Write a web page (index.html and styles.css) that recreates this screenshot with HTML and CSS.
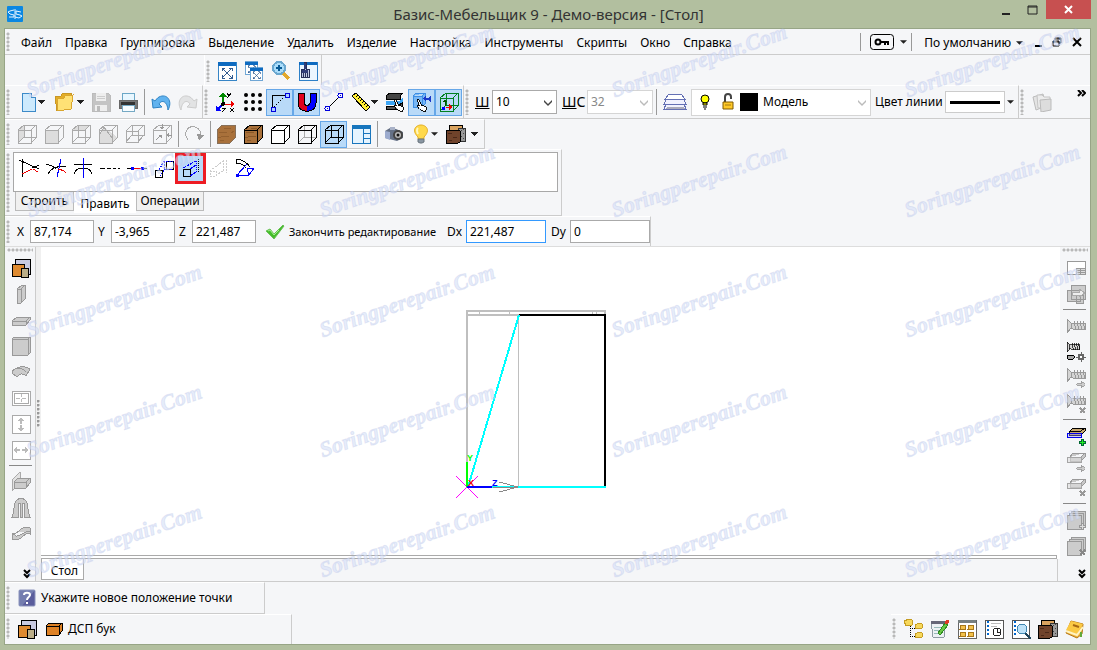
FILE: index.html
```html
<!DOCTYPE html>
<html lang="ru">
<head>
<meta charset="utf-8">
<title>Базис-Мебельщик 9 - Демо-версия - [Стол]</title>
<link rel="stylesheet" href="styles.css">
</head>
<body>
<svg class="defs" aria-hidden="true">
  <symbol id="cube" viewBox="0 0 20 20"><path d="M1 6h13v13H1zM1 6l6-5h12v13l-5 5M14 6l5-5" fill="none" stroke="currentColor"/></symbol>
  <symbol id="cubewire" viewBox="0 0 20 20"><path d="M1 6h13v13H1zM1 6l6-5h12v13l-5 5M14 6l5-5M7 1v12h12M7 13l-6 6" fill="none" stroke="currentColor"/></symbol>
  <symbol id="caret" viewBox="0 0 8 4"><path d="M0 0h8L4 4z" fill="#222"/></symbol>
  <symbol id="chev" viewBox="0 0 8 8"><path d="M0 1v2l4 4 4-4V1L4 5z" fill="currentColor"/></symbol>
  <symbol id="dbl" viewBox="0 0 8 10"><path d="M1 1l3 3 3-3M1 5l3 3 3-3" fill="none" stroke="#000" stroke-width="2"/></symbol>
  <symbol id="screw" viewBox="0 0 20 14"><path d="M1 0l4 4h2l2 0h10v6H7L5 9l-4 5zM5 4v6" fill="#d4d4d4" stroke="currentColor"/><path d="M8 2l2 9M11 2l2 9M14 2l2 9M17 2l2 9" stroke="currentColor"/></symbol>
  <symbol id="plates" viewBox="0 0 20 12"><path d="M4 5l3-4h12v4l-4 4H4zM4 5h11l4-4M15 5v4" fill="#c8c8c8" stroke="#999"/><path d="M1 5h14v5H1z" fill="#ddd" fill-opacity=".6" stroke="#a5a5a5"/></symbol>
  <symbol id="sheets" viewBox="0 0 20 20"><path d="M5 1h14v14h-2v2h-2v2H1V5h2V3h2z" fill="#ccc" stroke="#999"/><path d="M1 5h14v14M3 3h14v14" fill="none" stroke="#999"/></symbol>
  <symbol id="arrow" viewBox="0 0 10 8"><path d="M0 3h5V0l5 4-5 4V5H0z" fill="#ccc" stroke="#999"/></symbol>
  <symbol id="hand" viewBox="0 0 12 14"><path d="M1 1l2 0 3 6 4 1 1 3-1 2-3 0-3-2-3-4 2 0z" fill="#fff" stroke="#000"/></symbol>
  <symbol id="boards" viewBox="0 0 20 20"><path d="M4 1h15v15H4z" fill="#c8cae0" stroke="#000"/><path d="M1 6h12v12H1z" fill="#de8a30" stroke="#000"/><path d="M10 10h7v9h-7z" fill="#bbae88" stroke="#000"/></symbol>
  <symbol id="samples" viewBox="0 0 22 20"><path d="M4 1h13v5H4z" fill="#d9a35f" stroke="#000"/><path d="M14 4h6v13h-7z" fill="#999" stroke="#333"/><path d="M16 6h1M18 9h1M16 12h1M18 14h1M18 5h1" stroke="#444"/><path d="M1 6h12l2 1v11l-2 1H1z" fill="#70432b" stroke="#000"/><path d="M3 9h4M8 13h4M4 16h3" stroke="#4b2818"/></symbol>
  <symbol id="winx" viewBox="0 0 20 20"><path d="M1 1h18v18H1z" fill="#fff" stroke="#3685c6"/><path d="M1 1h18v4H1z" fill="#0d6ac0"/><path d="M5 7l10 10M15 7L5 17M5 10V7h3M12 7h3v3M5 14v3h3M12 17h3v-3" fill="none" stroke="#315b91"/></symbol>
</svg>

<header class="title">
  <svg class="logo" viewBox="0 0 16 16"><rect width="16" height="16" rx="1" fill="#0b87e2"/><path d="M7 4L3 5 1 6l2 2 4 1v2L2 11M14 6L9 5v3l4 1 2 1-3 2-4-1M8 3v10" fill="none" stroke="#e8f5ff"/></svg>
  <h1>Базис-Мебельщик 9 - Демо-версия - [Стол]</h1>
  <div class="winbtns">
    <button aria-label="Свернуть"><svg width="10" height="12"><path d="M1 10h8" stroke="#222" stroke-width="2"/></svg></button>
    <button aria-label="Развернуть"><svg width="12" height="10"><path d="M1 1h9v8H1zM1 2h9" fill="none" stroke="#222"/></svg></button>
    <button class="close" aria-label="Закрыть"><svg width="10" height="10"><path d="M1 1l7 7M8 1L1 8" stroke="#fff" stroke-width="2"/></svg></button>
  </div>
</header>

<main class="window">
  <nav class="menu">
    <i class="grip"></i>
    <button>Файл</button><button>Правка</button><button>Группировка</button><button>Выделение</button><button>Удалить</button><button>Изделие</button><button>Настройка</button><button>Инструменты</button><button>Скрипты</button><button>Окно</button><button>Справка</button>
    <div class="menuend">
      <i class="sep"></i>
      <button class="key" aria-label="Ключ"><svg width="24" height="16" viewBox="0 0 24 16"><rect x=".5" y=".5" width="23" height="15" rx="3" fill="#f5f6f8" stroke="#000"/><circle cx="8" cy="8" r="2.5" fill="none" stroke="#000" stroke-width="2"/><path d="M11 8h8M15 8v3M18 8v3" stroke="#000" stroke-width="2"/></svg><svg class="caret"><use href="#caret"/></svg></button>
      <i class="sep"></i>
      <button class="preset">По умолчанию <svg class="caret"><use href="#caret"/></svg></button>
      <button class="mdi" aria-label="Свернуть документ"><svg width="8" height="10"><path d="M0 9h7" stroke="#000" stroke-width="2"/></svg></button>
      <button class="mdi" aria-label="Восстановить документ"><svg width="10" height="10"><path d="M3 3V1h6v5H7M3 2h6M1 4h6v5H1zM1 5h6" fill="none" stroke="#000"/></svg></button>
      <button class="mdi" aria-label="Закрыть документ"><svg width="10" height="10"><path d="M1 1l8 8M9 1L1 9" stroke="#000" stroke-width="2"/></svg></button>
    </div>
  </nav>

  <div class="row viewrow">
    <div class="bar">
      <i class="grip"></i>
      <button class="btn" aria-label="Показать всё"><svg><use href="#winx"/></svg></button>
      <button class="btn" aria-label="Показать все окна"><svg viewBox="0 0 20 20"><use href="#winx" width="15" height="14"/><use href="#winx" x="5" y="6" width="15" height="14"/></svg></button>
      <button class="btn" aria-label="Увеличить"><svg viewBox="0 0 20 20"><path d="M12 12l6 6" stroke="#e2a82e" stroke-width="4"/><circle cx="8" cy="7" r="6" fill="#a9dcfa" stroke="#6aa7cf" stroke-width="2"/><path d="M5 7h6M8 4v6" stroke="#085a95" stroke-width="2"/></svg></button>
      <button class="btn" aria-label="Очистить окно"><svg viewBox="0 0 20 20"><path d="M1 1h18v18H1z" fill="#ecf6ff" stroke="#2d80c8"/><path d="M1 1h18v3H1z" fill="#0d6ac0"/><path d="M6 1h2v7h3v8H3V8h3z" fill="#bfc9e4" stroke="#27305a"/><path d="M4 9h6v3H4zM6 2h2v6H6z" fill="#303d79"/><path d="M5 12v4M7 12v4M9 12v4" stroke="#27305a"/></svg></button>
    </div>
  </div>

  <div class="row mainrow">
    <div class="bar">
      <i class="grip"></i>
      <button class="split" aria-label="Создать"><svg viewBox="0 0 20 20"><path d="M4 1h9l4 4v14H4z" fill="#cdeafd" stroke="#3c8ac8"/><path d="M13 1v4h4" fill="#fff" stroke="#3c8ac8"/></svg><svg class="caret"><use href="#caret"/></svg></button>
      <button class="split wide" aria-label="Открыть"><svg viewBox="0 0 20 20"><path d="M1 5l6-1 1-2 9-1 1 4-2 12-13 2z" fill="#e4ad27" stroke="#c89724"/><path d="M3 7l7-1 1-2 8-1-2 14-13 2z" fill="#ffe175" stroke="#d9a62e"/></svg><svg class="caret"><use href="#caret"/></svg></button>
      <button class="btn" disabled aria-label="Сохранить"><svg viewBox="0 0 20 20"><path d="M1 1h16l2 2v16H1z" fill="#c4c4c4" stroke="#bbb"/><path d="M5 1h10v8H5zM4 13h12v6H4z" fill="#eee"/><path d="M6 14h3v5H6z" fill="#bbb"/><path d="M6 4h8M6 6h8" stroke="#ccc"/></svg></button>
      <button class="btn" aria-label="Печать"><svg viewBox="0 0 20 20"><path d="M4 1h12v7H4z" fill="#e8f7ff" stroke="#6ba7c7"/><path d="M1 8h18v8H1z" fill="#777" stroke="#666"/><path d="M3 10h14v3H3z" fill="#333"/><path d="M4 13h12v6H4z" fill="#f7fcff" stroke="#75a9c4"/></svg></button>
      <i class="sep"></i>
      <button class="btn soft" aria-label="Отменить"><svg viewBox="0 0 20 20"><path d="M1 7l1 9 9-1-3-3c2-4 8-4 9 6 5-9-1-17-9-13-2 1-3 3-4 4z" fill="#61b3ef" stroke="#2c82c4"/></svg></button>
      <button class="btn soft" disabled aria-label="Вернуть"><svg viewBox="0 0 20 20"><path d="M19 7l-1 9-9-1 3-3c-2-4-8-4-9 6-5-9 1-17 9-13 2 1 3 3 4 4z" fill="#e2e3e4" stroke="#ccc"/></svg></button>
    </div>
    <div class="bar">
      <i class="grip"></i>
      <button class="btn" aria-label="Оси"><svg viewBox="0 0 20 20"><path d="M7 13V3" stroke="#080" stroke-width="2"/><path d="M3 5l4-5 4 5z" fill="#080"/><path d="M7 12h9" stroke="#e00"/><path d="M15 9l4 3-4 3z" fill="#e00"/><path d="M6 13l-4 4" stroke="#00f" stroke-width="2"/><path d="M0 14v5h5z" fill="#00f"/><circle cx="7" cy="12" r="2"/><path d="M11 1l2 3 2-3M13 4l-2 2M14 16l4 4M18 16l-4 4M6 16h4l-4 4h4" fill="none" stroke="#000"/></svg></button>
      <button class="btn soft" aria-label="Сетка"><svg viewBox="0 0 20 20"><path d="M3 3h.01M10 3h.01M17 3h.01M3 10h.01M10 10h.01M17 10h.01M3 17h.01M10 17h.01M17 17h.01" stroke="#000" stroke-width="4" stroke-linecap="round"/></svg></button>
      <button class="btn on" aria-label="Привязка к точкам"><svg viewBox="0 0 20 20"><path d="M2 15V3h13" fill="none" stroke="#000"/><path d="M4 15L15 4" stroke="#000" stroke-dasharray="1 2"/><path d="M1 15h4v4H1zM15 1h4v4h-4z" fill="#acf" stroke="#00d"/></svg></button>
      <button class="btn on" aria-label="Магнит"><svg viewBox="0 0 20 20"><path d="M1 1h6v10c0 3 6 3 6 0V1h6v10c0 11-18 11-18 0z" fill="#00f" stroke="#000"/><path d="M1 1h6v10c0 2 2 3 3 3v5c-6 0-9-4-9-8z" fill="#e2001b"/><path d="M1 1h6v10c0 3 6 3 6 0V1h6v10c0 11-18 11-18 0z" fill="none" stroke="#000"/></svg></button>
      <button class="btn" aria-label="Отрезок"><svg viewBox="0 0 20 20"><path d="M5 15L15 5" stroke="#000"/><g fill="#f5f6f8" stroke="#00d"><circle cx="3.500" cy="16.500" r="2.500"/><circle cx="16.500" cy="3.500" r="2.500"/></g><path d="M3 16h1v1H3zM16 3h1v1h-1z" fill="#00d"/></svg></button>
      <button class="split ruler" aria-label="Измерить"><svg viewBox="0 0 20 20"><path d="M1 4l4-3 14 14-4 4z" fill="#ffed35" stroke="#000"/><path d="M7 3L5 5M9 5L7 7M11 7L9 9M13 9l-2 2M15 11l-2 2M17 13l-2 2" stroke="#000"/></svg><svg class="caret"><use href="#caret"/></svg></button>
      <button class="btn" aria-label="Выбор слоя"><svg viewBox="0 0 20 20"><path d="M1 4l4-3h13l-3 3v3H1z" fill="#444" stroke="#000"/><path d="M1 9h13l4-3v4l-4 3H1z" fill="#3ca5f4"/><path d="M1 14h12l4-3v3l-4 3H1z" fill="#555" stroke="#000"/><use href="#hand" x="8" y="7" width="12" height="13"/></svg></button>
      <button class="btn on" aria-label="Выбор объекта"><svg viewBox="0 0 20 20"><path d="M1 4l3-3h9v11l-3 3H1zM1 4h9l3-3M10 4v11" fill="#78b7f5" stroke="#3c8ee5"/><path d="M11 6l3-2v2h2l3-3v8l-3-3h-2v2z" fill="#1a39c8"/><use href="#hand" x="4" y="7" width="12" height="13"/></svg></button>
      <button class="btn on" aria-label="Оси объекта"><svg class="green" viewBox="0 0 20 20"><use href="#cubewire"/><path d="M6 14V8" stroke="#050"/><path d="M4 10l2-3 2 3z" fill="#050"/><path d="M7 15h5" stroke="#e00"/><path d="M10 12l4 3-4 3z" fill="#e00"/><path d="M3 15h3v3H3z" fill="#00f"/></svg></button>
    </div>
    <div class="bar props">
      <i class="grip"></i>
      <label class="lbl" for="w"><u>Ш</u></label>
      <span class="sel w1"><select id="w"><option>10</option></select><svg class="chev"><use href="#chev"/></svg></span>
      <label class="lbl two" for="ws"><u>Ш</u>С</label>
      <span class="sel w2 off"><select id="ws" disabled><option>32</option></select><svg class="chev"><use href="#chev"/></svg></span>
      <i class="sep"></i>
      <button class="btn layers" aria-label="Слои"><svg class="w24" viewBox="0 0 24 20"><path d="M6 2h12l4 5H2z" fill="#fff" stroke="#6470b4"/><path d="M3 8l-2 4h22l-2-4M3 12l-2 5h22l-2-5" fill="#f1f2ff" stroke="#6470b4"/><path d="M4 15h16l2 2H2z" fill="#aab"/></svg></button>
      <span class="sel model off">
        <svg width="10" height="16" viewBox="0 0 10 16"><circle cx="5" cy="5" r="4" fill="#ff0" stroke="#000"/><path d="M3 9h4v2H3zM3 13h4M4 15h2" fill="#ff0" stroke="#000"/></svg>
        <svg width="12" height="18" viewBox="0 0 12 18"><path d="M3 9V4c0-4 6-4 6 0v2" fill="none" stroke="#444" stroke-width="2"/><path d="M1 9h10v7H1z" fill="#ffc928" stroke="#805b00"/><path d="M3 12h6" stroke="#a57a10"/></svg>
        <i class="swatch"></i>
        <select aria-label="Слой"><option>Модель</option></select><svg class="chev"><use href="#chev"/></svg>
      </span>
      <span class="lbl color">Цвет линии</span>
      <button class="line" aria-label="Цвет линии"><i></i></button>
      <svg class="caret"><use href="#caret"/></svg>
    </div>
    <div class="bar last">
      <i class="grip"></i>
      <button class="btn soft" disabled aria-label="Копии"><svg viewBox="0 0 20 20"><path d="M1 5l10-3 3 12-10 4z" fill="#e4e4e4" stroke="#bbb"/><path d="M5 3h5l2 2h6v11H6z" fill="#ececec" stroke="#c5c5c5"/><path d="M8 8l11-1v11l-10 2z" fill="#ddd" stroke="#bbb"/></svg></button>
      <button class="more" aria-label="Ещё"><svg width="9" height="7"><path d="M1 0l3 3-3 3M5 0l3 3-3 3" fill="none" stroke="#000" stroke-width="2"/></svg></button>
    </div>
  </div>

  <div class="row boxrow">
    <div class="bar gray">
      <i class="grip"></i>
      <button class="btn" aria-label="Вид слева"><svg viewBox="0 0 20 20"><path d="M1 6l6-5v12l-6 6z" fill="#ddd"/><use href="#cubewire"/></svg></button>
      <button class="btn" aria-label="Вид спереди"><svg viewBox="0 0 20 20"><path d="M1 6h13v13H1z" fill="#ddd"/><use href="#cube"/></svg></button>
      <button class="btn" aria-label="Вид сверху"><svg viewBox="0 0 20 20"><path d="M1 6l6-5h12l-5 5z" fill="#ddd"/><use href="#cubewire"/></svg></button>
      <button class="btn" aria-label="Изометрия"><svg viewBox="0 0 20 20"><path d="M1 19V12L6 3l13 10-5 6z" fill="#ddd"/><use href="#cube"/><path d="M1 12L6 3l8 11" fill="none" stroke="#aaa"/></svg></button>
      <button class="btn" aria-label="Перспектива"><svg viewBox="0 0 20 20"><path d="M1 7h12v11H1zM7 1h12v10H7zM1 7l6-6M13 7l6-6M13 18l6-7M1 18l6-7" fill="none" stroke="#aaa"/></svg></button>
      <button class="btn" aria-label="По нормали"><svg viewBox="0 0 20 20"><use href="#cube"/><path d="M10 0v5M15 11h5M4 16l5-5" fill="none" stroke="#999"/><path d="M8 3h4l-2 3zM17 9v4l-3-2zM6 11h4v4z" fill="#999"/></svg></button>
      <i class="sep s5"></i>
      <button class="btn" aria-label="Повернуть"><svg viewBox="0 0 20 20"><path d="M4 16C-2 8 5 1 11 3c4 1 6 5 6 8" fill="none" stroke="#aaa"/><path d="M13 10l2 7 5-6z" fill="#999"/></svg></button>
      <i class="sep s5"></i>
      <button class="btn" aria-label="Текстура"><svg viewBox="0 0 20 20"><path d="M1 6l5-5h13v13l-5 5H1z" fill="#a9713b" stroke="#87705a"/><path d="M3 9l4-1 4 1M2 14l6-2 5 1M8 4l7 1M15 9l3-2M4 17l4-1" fill="none" stroke="#94602f"/></svg></button>
      <button class="btn" aria-label="Текстура с рёбрами"><svg class="black" viewBox="0 0 20 20"><path d="M1 6l6-5h12v13l-5 5H1z" fill="#a9713b"/><path d="M3 9l4-1 4 1M2 14l6-2 5 1M8 4l6 0M4 17l4-1" fill="none" stroke="#8a5828"/><use href="#cube"/></svg></button>
      <button class="btn" aria-label="Без невидимых линий"><svg class="black" viewBox="0 0 20 20"><path d="M1 6l6-5h12v13l-5 5H1z" fill="#fff"/><use href="#cube"/></svg></button>
      <button class="btn" aria-label="Тонкие невидимые линии"><svg class="black" viewBox="0 0 20 20"><path d="M7 1v12h12M7 13l-6 6" fill="none" stroke="#aaa"/><use href="#cube"/></svg></button>
      <button class="btn on" aria-label="Каркас"><svg class="black"><use href="#cubewire"/></svg></button>
      <button class="btn" aria-label="Панели"><svg viewBox="0 0 20 20"><path d="M1 1h18v18H1zM12 4v15M12 9h7M12 14h7" fill="#e5f4ff" stroke="#1976bd"/><path d="M1 1h18v4H1z" fill="#1675bd"/></svg></button>
      <i class="sep"></i>
      <button class="btn soft" aria-label="Камера"><svg viewBox="0 0 20 20"><path d="M1 7l5-3 6 1 7 3v6l-6 3-12-3z" fill="#657186"/><path d="M1 7l5 1v8l-5-2z" fill="#9cabce"/><path d="M6 3h5v3H6z" fill="#a9b2c8"/><circle cx="14" cy="11" r="5" fill="#444"/><circle cx="14" cy="11" r="3" fill="#bbb"/><circle cx="14" cy="11" r="1.500" fill="#111"/></svg></button>
      <button class="split ruler soft" aria-label="Освещение"><svg viewBox="0 0 20 20"><path d="M7 13C0 6 5 1 10 1s10 5 3 12v2H7z" fill="#ffd94b" stroke="#e3ae25"/><path d="M7 4c-2 2-1 4 0 6" stroke="#fff6c0" stroke-width="2" fill="none"/><path d="M7 15h6v3l-2 1H9l-2-1z" fill="#8996a2" stroke="#69747c"/></svg><svg class="caret"><use href="#caret"/></svg></button>
      <button class="split mats" aria-label="Материалы"><svg class="w22"><use href="#samples"/></svg><svg class="caret"><use href="#caret"/></svg></button>
    </div>
  </div>

  <div class="row editrow">
    <div class="bar">
      <i class="grip"></i>
      <div class="tabpanel">
        <div class="tools">
          <button class="btn" aria-label="Усечь"><svg viewBox="0 0 20 20"><path d="M3 1v18M0 2l20 9M13 10l7-3" fill="none" stroke="#000"/><path d="M3 16l10-5M14 11l5 3" stroke="#e00"/></svg></button>
          <button class="btn" aria-label="Удлинить"><svg viewBox="0 0 20 20"><path d="M0 6c4 1 7 2 10 5M2 16c2-5 9-8 18-8" fill="none" stroke="#000"/><path d="M11 19l4-18" stroke="#00f"/><path d="M12 11c4 1 6 1 8 4" fill="none" stroke="#e00"/></svg></button>
          <button class="btn" aria-label="Разрезать"><svg viewBox="0 0 20 20"><path d="M1 6h18M1 16C3 8 17 8 19 16" fill="none" stroke="#000"/><path d="M10 0v20" stroke="#00f"/></svg></button>
          <button class="btn" aria-label="Разбить"><svg viewBox="0 0 20 20"><path d="M0 10h5M7 10h4M13 10h3M18 10h2" stroke="#000"/></svg></button>
          <button class="btn" aria-label="Соединить"><svg viewBox="0 0 20 20"><path d="M0 10h20" stroke="#000"/><path d="M5 10h10" stroke="#e00"/><path d="M4 9h3v3H4zM14 9h3v3h-3z" fill="#00f"/></svg></button>
          <button class="btn" aria-label="Сдвиг"><svg viewBox="0 0 20 20"><path d="M1 12h7v7H1z" fill="#fff" stroke="#000"/><path d="M12 3h7v8h-7z" fill="#fff" stroke="#000"/><path d="M5 12l5-9h9M10 3v9l-4 6M10 12l9-1" fill="none" stroke="#00f" stroke-dasharray="2 1"/></svg></button>
          <button class="btn picked" aria-label="Растянуть"><svg viewBox="0 0 20 20"><path d="M2 11h7v7H2z" fill="none" stroke="#000"/><path d="M2 10L15 3M9 18l6-4M9 11l6-4" fill="none" stroke="#00f" stroke-dasharray="3 1"/><path d="M15 3v11" stroke="#00f" stroke-dasharray="1 1"/><path d="M17 1v14" stroke="#000" stroke-dasharray="1 1"/></svg></button>
          <button class="btn" disabled aria-label="Сжать"><svg viewBox="0 0 20 20"><path d="M2 13h6v5H2zM2 13L15 3v10L8 17M18 2v13" fill="none" stroke="#ccc" stroke-dasharray="2 1"/></svg></button>
          <button class="btn" aria-label="Повернуть точку"><svg viewBox="0 0 20 20"><path d="M1 5V1c8 1 11 4 14 8M1 5c4 0 8 2 10 5" fill="none" stroke="#000"/><path d="M2 17l10-11M2 17h12M12 10h7l-5 7z" fill="none" stroke="#00f"/><path d="M1 16h3v3H1z" fill="#00f"/></svg></button>
        </div>
        <div class="tabs"><button>Строить</button><button class="cur">Править</button><button>Операции</button></div>
      </div>
    </div>
  </div>

  <div class="row coordrow">
    <div class="bar">
      <i class="grip"></i>
      <label>X <input value="87,174"></label>
      <label>Y <input value="-3,965"></label>
      <label>Z <input value="221,487"></label>
      <button class="done"><svg viewBox="0 0 20 16"><path d="M1 7l4-2 4 5 9-9 1 1-10 13z" fill="#45bd2b" stroke="#6abf58"/><path d="M3 7l2-1 4 5 5-5" stroke="#a4ef8f" fill="none"/></svg>Закончить редактирование</button>
      <label class="long">Dx <input class="focus" value="221,487"></label>
      <label class="long">Dy <input value="0"></label>
    </div>
  </div>

  <div class="work">
    <aside class="side left">
      <i class="hgrip"></i>
      <button class="tool" aria-label="Изделие"><svg viewBox="0 0 20 20"><use href="#boards"/></svg></button>
      <button class="tool" aria-label="Вертикальная панель"><svg viewBox="0 0 20 20"><path d="M6 5l5-4h3v14l-4 4H6zM6 5h4v14M10 5l4-4" fill="#ccc" stroke="#999"/></svg></button>
      <button class="tool" aria-label="Горизонтальная панель"><svg viewBox="0 0 20 20"><path d="M1 11l5-4h13v3l-4 5H1zM1 11h14v4M15 11l4-4" fill="#ccc" stroke="#999"/></svg></button>
      <button class="tool" aria-label="Фронтальная панель"><svg viewBox="0 0 20 20"><path d="M1 3l2-2h16v16l-2 2H1zM1 3h16v16M17 3l2-2" fill="#ccc" stroke="#999"/></svg></button>
      <button class="tool" aria-label="Гнутая панель"><svg viewBox="0 0 20 20"><path d="M1 11C4 4 14 3 19 7l-4 7c-3-3-6-3-9 1z" fill="#ccc" stroke="#999"/><path d="M1 9c4-4 10-4 14 1" fill="none" stroke="#999"/></svg></button>
      <button class="tool" aria-label="По проёму"><svg viewBox="0 0 20 20"><path d="M1 3h18v14H1zM3 5h14v10H3z" fill="#fff" stroke="#aaa"/><path d="M5 10h4M11 10h4M10 6v3M10 11v3" stroke="#bbb"/></svg></button>
      <button class="tool" aria-label="По высоте"><svg viewBox="0 0 20 20"><path d="M1 1h18v18H1z" fill="#fff" stroke="#aaa"/><path d="M10 3l3 4h-2v3H9V7H7zM10 18l3-4h-2v-3H9v3H7z" fill="#bbb"/></svg></button>
      <button class="tool" aria-label="По ширине"><svg viewBox="0 0 20 20"><path d="M1 1h18v18H1z" fill="#fff" stroke="#aaa"/><path d="M2 10l4-3v2h3v2H6v2zM18 10l-4-3v2h-3v2h3v2z" fill="#bbb"/></svg></button>
      <i class="hsep"></i>
      <button class="tool" aria-label="Выдавливание"><svg viewBox="0 0 20 20"><path d="M1 19V8l8-8v10z" fill="#e2e2e2" stroke="#aaa"/><path d="M3 10l4-4h12v5l-4 5H3zM3 10h12v6M15 10l4-4" fill="#ccc" stroke="#999"/></svg></button>
      <button class="tool" aria-label="Вращение"><svg viewBox="0 0 20 20"><path d="M1 19C4 13 2 5 6 2c2-2 6-2 8 0 4 3 2 11 5 17h-6V5h-2v14H9V5H7v14z" fill="#ccc" stroke="#999"/></svg></button>
      <button class="tool" aria-label="По траектории"><svg viewBox="0 0 20 20"><path d="M1 9c5 2 6-2 9-4s5-2 9-1v6c-5-2-6 2-9 4s-5 2-9 1zM1 9l4 3c5 1 7-5 14-5" fill="#ccc" stroke="#999"/></svg></button>
      <button class="expand" aria-label="Ещё инструменты"><svg><use href="#dbl"/></svg></button>
    </aside>
    <div class="splitter"><i></i></div>
    <section class="doc">
      <svg class="canvas" role="img" aria-label="Чертёж стола">
        <g transform="translate(-41 -247)" fill="none" shape-rendering="crispEdges">
          <path d="M467 487V311h138v4M467 315h52" stroke="#bfbfbf" stroke-width="2"/>
          <path d="M518.500 315v172M479.500 312v3M509.500 312v3M592.500 312v3M596.500 312v3" stroke="#bfbfbf"/>
          <path d="M519 315h86v172" stroke="#000" stroke-width="2"/>
          <path d="M468 487l51-172M467 487h139" stroke="#0ff" stroke-width="2"/>
          <path d="M499 482l19 5-19 5M493 487.500h25" stroke="#888"/>
          <path d="M456 476l22 22M478 476l-22 22" stroke="#f0f"/>
          <path d="M467 487v-25" stroke="#0f0" stroke-width="2"/>
          <path d="M467 487h25" stroke="#00f" stroke-width="2"/>
          <g class="axis"><text x="467" y="461" fill="#0f0">Y</text><text x="468" y="486" fill="#e00">X</text><text x="492" y="486" fill="#00f">Z</text></g>
        </g>
      </svg>
      <div class="docline"></div>
      <div class="doctabs"><button>Стол</button><i></i></div>
    </section>
    <aside class="side right">
      <i class="hgrip"></i>
      <button class="tool" aria-label="Таблица"><svg viewBox="0 0 20 20"><path d="M1 3h18v13H1z" fill="#fff" stroke="#999"/><path d="M10 10h9v6h-9zM10 12h9M10 14h9M14 10v6" fill="#ddd" stroke="#999"/></svg></button>
      <button class="tool" aria-label="Переместить"><svg viewBox="0 0 20 20"><path d="M5 1h14v14H5zM1 6h13v11H1zM10 11h7v8h-7z" fill="#ccc" stroke="#999"/><path d="M6 8h7V5l6 4-6 4v-2H6z" fill="#eee" stroke="#aaa"/></svg></button>
      <i class="hsep"></i>
      <button class="tool gray2" aria-label="Крепёж"><svg viewBox="0 0 20 20"><use href="#screw" y="3" height="14"/></svg></button>
      <button class="tool" aria-label="Параметры крепежа"><svg class="black" viewBox="0 0 20 20"><use href="#screw" width="15" height="10"/><path d="M2 13h5l1 1v2l-1 1H2l-1-1v-2z" fill="#aaa" stroke="#000"/><circle cx="15" cy="15" r="2.500" fill="#fff" stroke="#666" stroke-width="2"/><path d="M15 10v2M15 18v2M10 15h2M18 15h2M12 12l1 1M18 12l-1 1M12 18l1-1M18 18l-1-1" stroke="#666"/></svg></button>
      <button class="tool gray2" aria-label="Переместить крепёж"><svg viewBox="0 0 20 20"><use href="#screw" height="14"/><use href="#arrow" x="10" y="13" width="10" height="7"/></svg></button>
      <button class="tool gray2" aria-label="Удалить крепёж"><svg viewBox="0 0 20 20"><use href="#screw" height="14"/><path d="M14 14l5 5M19 14l-5 5" stroke="#999" stroke-width="2"/></svg></button>
      <i class="hsep"></i>
      <button class="tool" aria-label="Добавить кромку"><svg viewBox="0 0 20 20"><path d="M3 6l4-4h12v3l-4 4H3z" fill="#c5a66f" stroke="#000"/><path d="M3 5h12l4-3M4 7h11" stroke="#000" fill="none"/><path d="M1 7h14v4H1z" fill="#99f" fill-opacity=".4" stroke="#00e"/><path d="M15 13h3v2h2v3h-2v2h-3v-2h-2v-3h2z" fill="#063"/><path d="M16 14h1v2h2v1h-2v2h-1v-2h-2v-1h2z" fill="#2e2"/></svg></button>
      <button class="tool" aria-label="Переместить кромку"><svg viewBox="0 0 20 20"><use href="#plates" height="12"/><use href="#arrow" x="10" y="13" width="10" height="7"/></svg></button>
      <button class="tool" aria-label="Удалить кромку"><svg viewBox="0 0 20 20"><use href="#plates" height="12"/><path d="M14 13l5 5M19 13l-5 5" stroke="#999" stroke-width="2"/></svg></button>
      <i class="hsep"></i>
      <button class="tool" aria-label="Добавить пласть"><svg viewBox="0 0 20 20"><use href="#sheets"/><path d="M15 13h3v2h2v3h-2v2h-3v-2h-2v-3h2z" fill="#999"/><path d="M16 14h1v2h2v1h-2v2h-1v-2h-2v-1h2z" fill="#ddd"/></svg></button>
      <button class="tool" aria-label="Удалить пласть"><svg viewBox="0 0 20 20"><use href="#sheets"/><path d="M14 14l5 5M19 14l-5 5" stroke="#888" stroke-width="2"/></svg></button>
      <button class="expand" aria-label="Ещё инструменты"><svg><use href="#dbl"/></svg></button>
    </aside>
  </div>

  <footer>
    <div class="bar hint">
      <i class="grip"></i>
      <svg viewBox="0 0 18 18"><rect x="1" y="1" width="16" height="16" rx="1" fill="#5a5d9c" stroke="#8c94bc"/><path d="M1 1h16L4 17H1z" fill="#8592bc" fill-opacity=".6"/><path d="M6 6c0-3 6-3 6 0 0 2-3 2-3 5M9 13v2" fill="none" stroke="#fff" stroke-width="2"/></svg>
      <span>Укажите новое положение точки</span>
    </div>
    <div class="foot2">
      <div class="bar material">
        <i class="grip"></i>
        <svg viewBox="0 0 20 20"><use href="#boards"/></svg>
        <svg viewBox="0 0 18 14"><path d="M1 4l3-3h13v8l-3 4H1zM1 4h13v9M14 4l3-3" fill="#de8226" stroke="#000"/></svg>
        <span>ДСП бук</span>
      </div>
      <div class="bar panels">
        <i class="grip"></i>
        <button class="btn" aria-label="Структура"><svg viewBox="0 0 20 20"><path d="M7 5v12h5M7 9h5" fill="none" stroke="#000" stroke-dasharray="1 1"/><path d="M1 2l5-2 3 1v5l-6 1zM12 6l4-2 3 1v4l-6 1zM12 15l4-2 3 1v4l-6 1z" fill="#f7d85b" stroke="#c59c22"/></svg></button>
        <button class="btn" aria-label="Свойства"><svg viewBox="0 0 20 20"><path d="M1 2h14l-1 16H3z" fill="#edf1f4" stroke="#8e9ba3"/><path d="M1 2h15v3H1z" fill="#667"/><path d="M4 8h7M4 11h5M4 14h5" stroke="#9bb"/><path d="M8 14L15 4l3 2-8 10z" fill="#68c844" stroke="#2d8920"/><circle cx="17" cy="3" r="2" fill="#dd3b27"/></svg></button>
        <button class="btn" aria-label="Библиотека"><svg viewBox="0 0 20 20"><path d="M1 1h18v18H1z" fill="#fff" stroke="#666"/><path d="M1 1h18v3H1z" fill="#777f80"/><path d="M4 6h4v4H3zM12 6h4v4h-5zM4 13h4v4H3zM12 13h4v4h-5z" fill="#f3c14b" stroke="#a97718"/></svg></button>
        <button class="btn" aria-label="История"><svg viewBox="0 0 20 20"><path d="M1 1h18v18H1z" fill="#fff" stroke="#555"/><path d="M4 2v16" stroke="#06c" stroke-width="2" stroke-dasharray="2 2"/><path d="M7 4h10M7 7h6" stroke="#bbb"/><circle cx="13" cy="13" r="4" fill="#fff" stroke="#222"/><path d="M13 10v3h3" fill="none" stroke="#222"/></svg></button>
        <button class="btn" aria-label="Поиск"><svg viewBox="0 0 20 20"><path d="M1 1h17v18H1z" fill="#fff" stroke="#555"/><path d="M4 2v16" stroke="#06c" stroke-width="2" stroke-dasharray="2 2"/><path d="M14 14l6 6" stroke="#20465c" stroke-width="2"/><circle cx="11" cy="10" r="5" fill="#bfe2f7" stroke="#4287b1"/></svg></button>
        <button class="btn" aria-label="Материалы"><svg class="w22"><use href="#samples"/></svg></button>
        <button class="btn soft" aria-label="Справочник"><svg viewBox="0 0 20 20"><path d="M6 2l12 3-1 10-5 4-11-5z" fill="#edb23a" stroke="#b67614"/><path d="M6 2l12 3-6 10-11-4z" fill="#fbc944"/><path d="M1 12l11 4 6-8" fill="none" stroke="#fff3c1" stroke-width="2"/><path d="M8 6l6 2" stroke="#a66813" stroke-width="2"/><path d="M16 13v5" stroke="#63a939" stroke-width="2"/></svg></button>
      </div>
    </div>
  </footer>
</main>

<div class="marks">
  <span>Soringperepair.Com</span><span>Soringperepair.Com</span><span>Soringperepair.Com</span><span>Soringperepair.Com</span>
  <span>Soringperepair.Com</span><span>Soringperepair.Com</span><span>Soringperepair.Com</span><span>Soringperepair.Com</span>
  <span>Soringperepair.Com</span><span>Soringperepair.Com</span><span>Soringperepair.Com</span><span>Soringperepair.Com</span>
  <span>Soringperepair.Com</span><span>Soringperepair.Com</span><span>Soringperepair.Com</span><span>Soringperepair.Com</span>
  <span>Soringperepair.Com</span><span>Soringperepair.Com</span><span>Soringperepair.Com</span><span>Soringperepair.Com</span>
</div>
</body>
</html>
```
FILE: styles.css
```css
* { box-sizing: border-box; }
html, body { height: 100%; }
body {
  margin: 0;
  display: flex;
  flex-direction: column;
  position: relative;
  overflow: hidden;
  background: #b2bf9f;
  color: #000;
  font: 12px/16px "Noto Sans", "Open Sans", sans-serif;
}
button, input, select { font: inherit; color: inherit; }
button { border: 0; padding: 0; background: none; display: flex; align-items: center; justify-content: center; white-space: nowrap; }
svg { display: block; flex: none; }
.defs { position: absolute; width: 0; height: 0; }

.title { height: 28px; flex: none; display: flex; align-items: center; position: relative; padding: 0 23px 0 7px; }
.logo { width: 16px; height: 16px; }
.title h1 { flex: 1; margin: 0; font-size: 15px; line-height: 20px; font-weight: 400; text-align: center; color: #333; }
.winbtns { position: absolute; right: 6px; top: 0; display: flex; height: 19px; }
.winbtns button { width: 27px; }
.winbtns .close { width: 45px; background: #c75050; }

.window { flex: 1; min-height: 0; margin: 0 6px 5px 4px; border: 1px solid #97a586; background: #f5f6f8; display: flex; flex-direction: column; }
.row, .menu { display: flex; flex: none; }
.bar { display: flex; align-items: center; flex: none; border-top: 1px solid #fff; border-right: 1px solid #ccc; }
.grip { width: 8px; flex: none; align-self: stretch; margin: 3px 0; background: radial-gradient(circle at 3px 2px, #b8b8b8 1px, transparent 2px) 0 0 / 8px 4px; }
.sep { width: 6px; height: 26px; flex: none; background: linear-gradient(#999, #999) 3px 0 / 1px 100% no-repeat; }
.s5 { width: 5px; }
.btn { width: 27px; height: 27px; flex: none; }
.btn > svg, .split > svg, .tool > svg { width: 20px; height: 20px; shape-rendering: crispEdges; }
.soft > svg { shape-rendering: auto; }
.btn .w24 { width: 24px; }
.btn .w22, .split .w22 { width: 22px; }
.btn.on { background: #b9daf8; border: 1px solid #66a7e8; }
.split { width: 37px; height: 27px; flex: none; }
.split.wide { gap: 3px; }
.split.ruler { width: 34px; }
.split.mats { width: 40px; gap: 4px; }
svg.caret, .split > svg.caret { width: 7px; height: 4px; }
.black { color: #000; }
.green { color: #008020; }
.gray { color: #aaa; }
.gray2 { color: #999; }

.menu { height: 26px; align-items: center; border-bottom: 1px solid #ccc; }
.menu > button { margin-right: 13px; padding-top: 2px; }
.menu .grip { margin-right: 8px; }
.menuend { display: flex; align-items: center; margin-left: auto; padding-right: 2px; }
.menuend .sep { height: 18px; }
.key { gap: 6px; margin: 0 1px 0 7px; }
.preset { gap: 5px; margin: 0 7px 0 10px; padding-top: 2px; }
.mdi { width: 18px; }
.mdi:last-child { width: 22px; }

.viewrow { height: 30px; padding-left: 199px; }
.viewrow .bar { width: 118px; border-left: 1px solid #fff; border-top: 0; padding-top: 2px; }
.mainrow { height: 34px; border-bottom: 1px solid #ccc; }
.mainrow .bar { padding-right: 1px; }
.mainrow .bar + .bar .grip { width: 9px; }
.mainrow .bar.props { flex: 1; padding-right: 4px; }
.mainrow .bar.last { width: 71px; border-right: 0; }
.more { align-self: flex-start; margin: 4px 3px 0 auto; }
.lbl { width: 19px; font-size: 14px; padding-left: 2px; white-space: nowrap; }
.lbl.two { width: 30px; padding-left: 5px; }
.lbl.color { width: 74px; padding-left: 4px; font-size: 12px; }
.sel { position: relative; display: flex; align-items: center; height: 24px; background: #fff; border: 1px solid #aaa; }
.sel select { appearance: none; flex: 1; width: 100%; min-width: 0; height: 22px; border: 0; padding: 0 16px 0 3px; background: none; opacity: 1; }
.chev { width: 8px; height: 8px; position: absolute; right: 4px; top: 8px; pointer-events: none; color: #444; }
.w1 { width: 65px; }
.w2 { width: 66px; }
.off { border-color: #d5d5d5; }
.off .chev { color: #bbb; }
.w2 select { color: #888; }
.layers { width: 32px; }
.model { flex: 1; height: 27px; padding-left: 8px; }
.model .chev { top: 9px; }
.model > svg:nth-child(2) { margin: 0 6px 0 12px; }
.swatch { width: 18px; height: 18px; flex: none; background: #000; margin-right: 2px; }
.line { width: 60px; height: 22px; border: 1px solid #ccc; background: #fff; margin-right: 2px; }
.line i { width: 50px; height: 3px; background: #000; }

.boxrow { height: 30px; }
.boxrow .bar { padding-right: 3px; border-bottom: 1px solid #ccc; }
.editrow { height: 67px; }
.editrow .bar { width: 557px; border-bottom: 1px solid #ccc; align-items: flex-start; }
.tabpanel { flex: 1; margin: 2px 3px 0 0; }
.tools { height: 40px; display: flex; align-items: center; padding: 0 0 8px 1px; background: #fff; border: 1px solid #a8a8a8; }
.picked { width: 31px; height: 31px; margin: 0 -2px; background: #b9daf8; border: 3px solid #ed1c24; }
.tabs { display: flex; align-items: flex-start; padding-left: 2px; }
.tabs button { height: 19px; width: 59px; background: #f0f0f0; border: 1px solid #bbb; border-top: 0; }
.tabs button + button { width: 68px; }
.tabs button.cur { width: 62px; height: 21px; background: #fff; border: 0; padding-top: 3px; }

.coordrow { height: 31px; border-bottom: 1px solid #ddd; }
.coordrow .bar { padding-right: 0; }
.coordrow label { display: flex; align-items: center; justify-content: space-between; width: 81px; padding-left: 4px; }
.coordrow label.long { width: 104px; padding-left: 5px; }
.coordrow input { width: 64px; height: 23px; border: 1px solid #aaa; padding: 0 3px; background: #fff; outline: 0; }
.coordrow .long input { width: 80px; }
.coordrow .focus { border-color: #3399ff; }
.done { margin-left: 9px; width: 177px; gap: 4px; justify-content: flex-start; font-size: 11px; }
.done svg { width: 20px; height: 16px; }

.work { display: flex; flex: 1; min-height: 0; }
.side { width: 30px; flex: none; display: flex; flex-direction: column; align-items: center; padding-right: 1px; }
.left { width: 31px; border-right: 1px solid #ccc; padding: 0; }
.hgrip { width: 26px; height: 8px; flex: none; background: radial-gradient(circle at 2px 3px, #b8b8b8 1px, transparent 2px) 0 0 / 4px 8px; }
.tool { width: 29px; height: 26px; flex: none; padding-left: 2px; }
.hsep { width: 23px; height: 6px; flex: none; background: linear-gradient(#888, #888) 0 2px / 100% 1px no-repeat; }
.expand { margin: auto 0 2px 14px; }
.expand svg { width: 8px; height: 10px; }
.splitter { width: 5px; flex: none; background: #f0f0f0; display: flex; align-items: center; }
.splitter i { width: 3px; height: 28px; margin-left: 1px; background: radial-gradient(circle at 1px 1px, #999 1px, transparent 2px) 0 0 / 3px 4px; }
.doc { flex: 1; min-width: 0; display: flex; flex-direction: column; background: #fff; }
.canvas { flex: 1; min-height: 0; width: 100%; }
.axis { font: bold 9px "Liberation Sans", sans-serif; }
.docline { height: 4px; flex: none; margin-right: 3px; border: 1px solid #aaa; border-left: 0; }
.doctabs { display: flex; height: 22px; flex: none; background: #f5f6f8; }
.doctabs button { width: 43px; height: 21px; background: #fff; border: 1px solid #aaa; border-top: 0; padding: 4px 0 0 4px; }
.doctabs i { flex: 1; margin-right: 2px; border-right: 1px solid #ccc; }

footer { flex: none; border-top: 1px solid #ccc; }
.hint { width: 260px; height: 32px; border-bottom: 1px solid #ccc; }
.hint svg { width: 18px; height: 18px; margin: 0 5px 0 5px; }
.hint span, .material span { font-size: 12px; white-space: nowrap; }
.foot2 { display: flex; justify-content: space-between; }
.foot2 .bar { height: 30px; padding-bottom: 2px; }
.material { width: 287px; }
.material svg { width: 20px; height: 20px; margin: 0 8px 0 4px; shape-rendering: crispEdges; }
.material svg + svg { width: 18px; height: 14px; margin: 0 5px 0 0; }
.panels { border-right: 0; padding-right: 2px; }

.marks { position: absolute; inset: 0; padding: 1px 0 0 15px; overflow: hidden; display: grid; grid-template-columns: repeat(4, 1fr); grid-auto-rows: 120px; column-gap: 94px; pointer-events: none; padding-right: 6px; }
.marks span { min-width: 0; height: 120px; display: flex; align-items: center; justify-content: center; transform: rotate(-19deg); font: italic bold 22px/28px "Liberation Serif", serif; color: rgba(214, 224, 248, .6); -webkit-text-stroke: 1px rgba(165, 176, 220, .22); white-space: nowrap; }
```
